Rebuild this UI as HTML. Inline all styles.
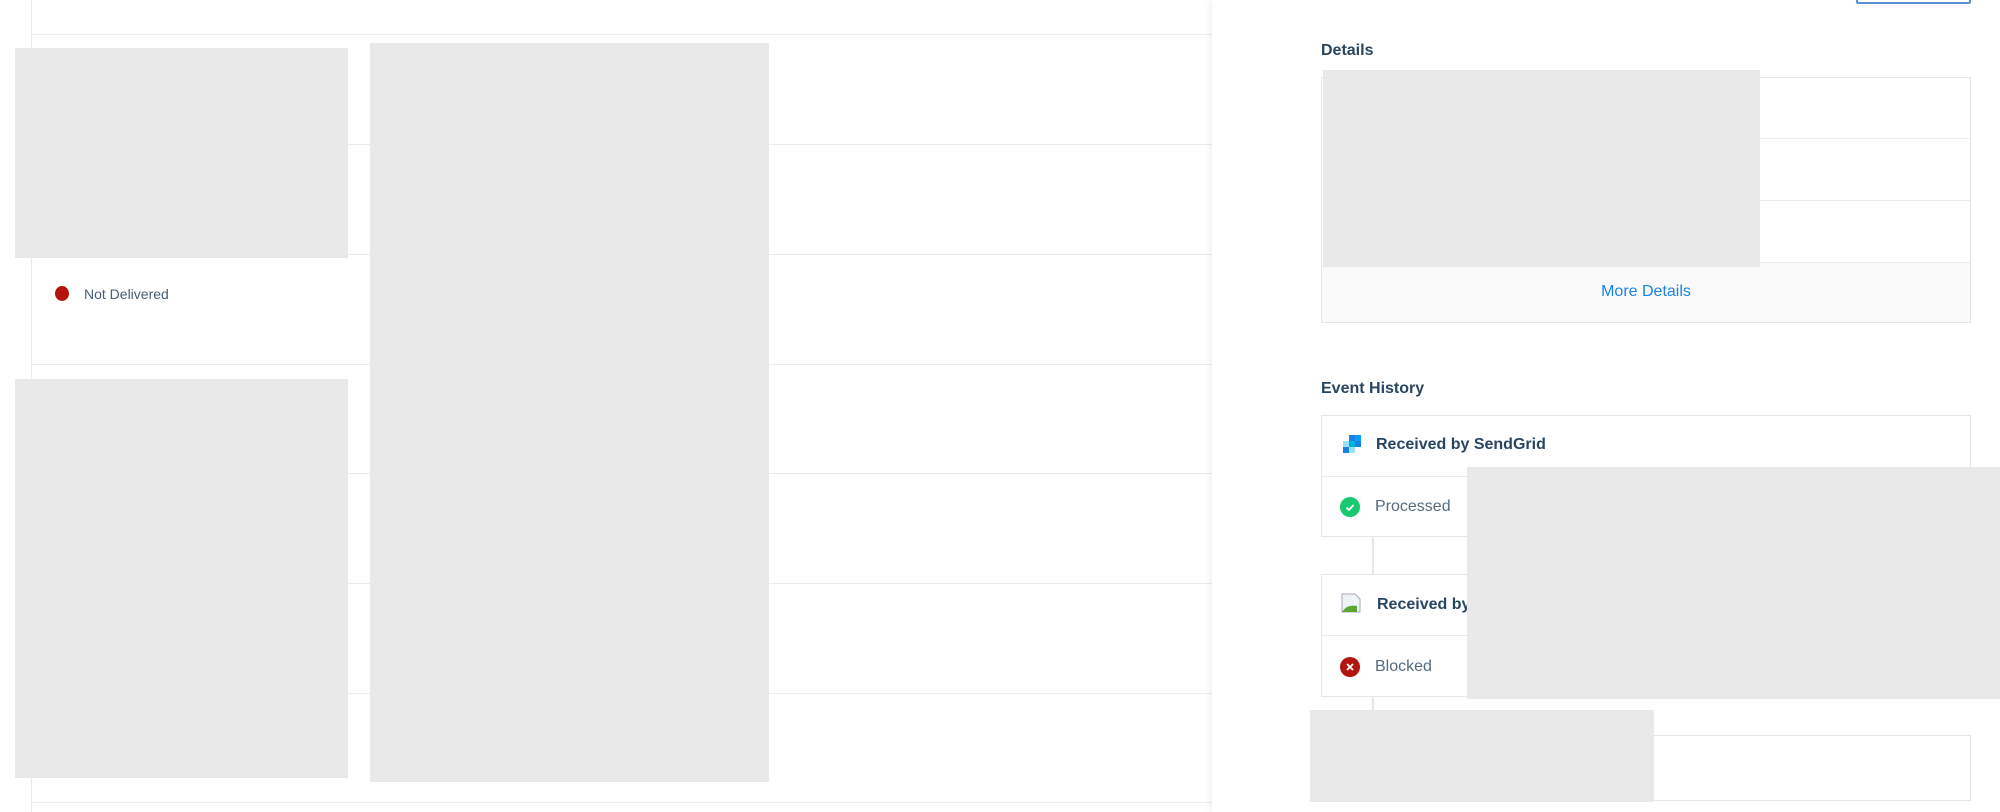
<!DOCTYPE html>
<html><head><meta charset="utf-8"><style>
*{margin:0;padding:0;box-sizing:border-box}
body{width:2000px;height:812px;overflow:hidden;background:#fff;font-family:"Liberation Sans",sans-serif;position:relative;color:#294661}
.a{position:absolute}
.g{position:absolute;background:#e9e9e9}
.h{position:absolute;height:1px;background:#e9ecef}
.box{position:absolute;border:1px solid #e3e6ea;background:#fff}
.t{position:absolute;font-size:16px;white-space:nowrap}
.b{font-weight:bold;color:#294661}
</style></head><body>
<div class="a" style="left:31px;top:0;width:1px;height:812px;background:#e9ecef"></div>
<div class="h" style="left:31px;top:34px;width:1181px"></div>
<div class="h" style="left:31px;top:144px;width:1181px"></div>
<div class="h" style="left:31px;top:254px;width:1181px"></div>
<div class="h" style="left:31px;top:364px;width:1181px"></div>
<div class="h" style="left:31px;top:473px;width:1181px"></div>
<div class="h" style="left:31px;top:583px;width:1181px"></div>
<div class="h" style="left:31px;top:693px;width:1181px"></div>
<div class="h" style="left:31px;top:802px;width:1181px"></div>
<div class="a" style="left:55px;top:286px;width:14px;height:15px;border-radius:50%;background:#b3140d"></div>
<div class="t" style="left:84px;top:286px;font-size:14px;color:#4a5d73">Not Delivered</div>
<div class="g" style="left:15px;top:48px;width:333px;height:210px"></div>
<div class="g" style="left:15px;top:379px;width:333px;height:399px"></div>
<div class="g" style="left:370px;top:43px;width:399px;height:739px"></div>

<div class="a" style="left:1212px;top:0;width:788px;height:812px;background:#fff;box-shadow:-3px 0 6px rgba(0,0,0,0.05)"></div>
<div class="a" style="left:1856px;top:-4px;width:115px;height:8px;border:2px solid #5b8fd6;border-radius:2px"></div>
<div class="t b" style="left:1321px;top:42px">Details</div>
<div class="box" style="left:1321px;top:77px;width:650px;height:246px"></div>
<div class="h" style="left:1322px;top:138px;width:648px"></div>
<div class="h" style="left:1322px;top:200px;width:648px"></div>
<div class="a" style="left:1322px;top:262px;width:648px;height:60px;background:#fafafa;border-top:1px solid #e9ecef"></div>
<div class="t" style="left:1321px;top:283px;width:650px;text-align:center;color:#1a82e2">More Details</div>
<div class="g" style="left:1323px;top:70px;width:437px;height:197px"></div>

<div class="t b" style="left:1321px;top:380px">Event History</div>
<div class="box" style="left:1321px;top:415px;width:650px;height:122px"></div>
<div class="h" style="left:1322px;top:476px;width:648px"></div>
<svg class="a" style="left:1342px;top:434px" width="20" height="20" viewBox="0 0 20 20"><rect x="7" y="1" width="12" height="12" fill="#1a82e2"/><rect x="13" y="1" width="6" height="6" fill="#099dfd"/><rect x="7" y="7" width="6" height="6" fill="#00b3e3"/><rect x="1" y="7" width="6" height="6" fill="#99e1f4"/><rect x="1" y="13" width="6" height="6" fill="#1a82e2"/><rect x="7" y="13" width="6" height="6" fill="#99e1f4"/></svg>
<div class="t b" style="left:1376px;top:436px">Received by SendGrid</div>
<svg class="a" style="left:1340px;top:497px" width="20" height="20"><circle cx="10" cy="10" r="10" fill="#18c96e"/><path d="M6.5 10.5l2.5 2.5 4.5-5" stroke="#fff" stroke-width="1.8" fill="none"/></svg>
<div class="t" style="left:1375px;top:498px;color:#546b81">Processed</div>
<div class="a" style="left:1372px;top:537px;width:2px;height:37px;background:#e3e6ea"></div>
<div class="box" style="left:1321px;top:574px;width:650px;height:123px"></div>
<div class="h" style="left:1322px;top:635px;width:648px"></div>
<svg class="a" style="left:1341px;top:593px" width="20" height="20"><path d="M1 1h13l5 5v13H1z" fill="#eef3f8" stroke="#aab"/><path d="M1 19c4-6 9-7 15-6v6z" fill="#5aa832"/></svg>
<div class="t b" style="left:1377px;top:596px">Received by</div>
<svg class="a" style="left:1340px;top:657px" width="20" height="20"><circle cx="10" cy="10" r="10" fill="#b3140d"/><path d="M7 7l6 6M13 7l-6 6" stroke="#fff" stroke-width="1.8"/></svg>
<div class="t" style="left:1375px;top:658px;color:#546b81">Blocked</div>
<div class="a" style="left:1372px;top:697px;width:2px;height:39px;background:#e3e6ea"></div>
<div class="box" style="left:1321px;top:735px;width:650px;height:66px"></div>
<div class="g" style="left:1467px;top:467px;width:533px;height:232px"></div>
<div class="g" style="left:1310px;top:710px;width:344px;height:92px"></div>
</body></html>
